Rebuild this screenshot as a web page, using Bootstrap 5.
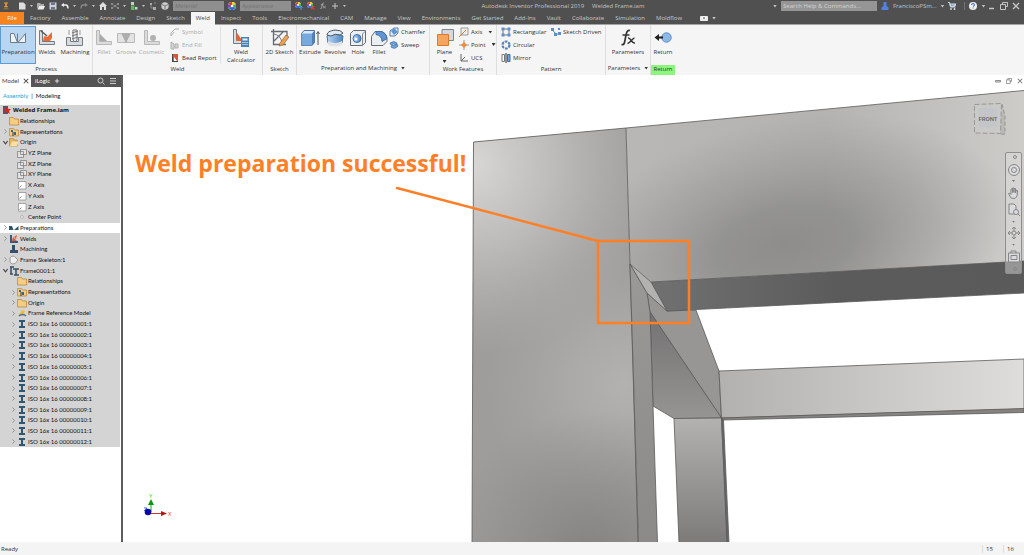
<!DOCTYPE html>
<html lang="en">
<head>
<meta charset="utf-8">
<meta name="viewport" content="width=device-width, initial-scale=1">
<title>Autodesk Inventor Professional 2019 - Welded Frame.iam</title>
<link rel="stylesheet" href="https://cdn.jsdelivr.net/npm/bootstrap@5.3.0/dist/css/bootstrap.min.css">
<script src="https://cdn.jsdelivr.net/npm/bootstrap@5.3.0/dist/js/bootstrap.bundle.min.js"></script>
<style>
body{font:6px/8px "Open Sans","Noto Sans",sans-serif;color:#333;background:#fff;white-space:nowrap}
button,input,select{font:inherit;color:inherit;border:0;background:none;padding:0;margin:0}
svg{display:block;flex:none}
a{color:inherit;text-decoration:none}
.i6{width:6px;height:6px}.i8{width:8px;height:8px}.i10{width:10px;height:10px}.i20{width:20px;height:20px}
.caret{width:4px;height:3px;background:currentColor;clip-path:polygon(0 0,100% 0,50% 100%);flex:none}
/* title bar */
.titlebar{height:12px;background:#505050;color:#c4c4c4}
.qat{gap:4px;padding-left:2px;width:353px}
.qat .caret{width:3px;height:2px}
.combo{width:51px;height:10px;flex:none;background:#8f8f8f;color:#747474;font-style:italic;padding-left:2px;appearance:none}
.search{width:96px;height:10px;background:#959595;padding-left:2px}
.search::placeholder{color:#d4d4d4;opacity:1}
.right{width:251px}
/* tabs */
.tabs{height:13px;background:#505050;color:#c8c8c8;border-bottom:1px solid #a5a5a5}
.tabs .nav-link{padding:2px 5px;margin-right:1px;height:12px;line-height:8px;color:inherit;border:0;border-radius:0}
.tabs .filetab{background:#f5831f;color:#fff;width:24px;text-align:center}
.tabs .active{background:#f5f5f5;color:#444;height:13px;margin-bottom:-1px}
/* ribbon */
.ribbon{height:50px;background:#f5f5f5}
.panel{border-right:1px solid #dedede;flex:none}
.panel:last-child{border:0}
.body-row{height:40px;padding-top:1px}
.panel-title{height:10px;line-height:9px;text-align:center}
.big{height:38px;padding-top:1px;display:flex;flex-direction:column;align-items:center;flex:none;border:1px solid transparent}
.on{background:#b8d6f2;border-color:#5c9bd3}
.off{color:#a9a9a9}.off svg{opacity:.42}
.stack{display:grid;grid-template-rows:12px 13px 13px;align-content:start}
.stack button{display:flex;align-items:center;gap:2px}
.w20{width:20px}.w22{width:22px}.w24{width:24px}.w26{width:26px}.w29{width:29px}.w33{width:33px}.w34{width:34px}.w36{width:36px}.w37{width:37px}.w40{width:40px}.w42{width:42px}.w44{width:44px}.w50{width:50px}.w54{width:54px}
.returntag{background:#8cf57c}
/* browser */
.browser{width:123px;border-right:2px solid #5d5d5d;flex:none;font-family:Lato,"Open Sans",sans-serif;color:#111}
.bhead{height:12px;background:#555;color:#fff}
.bhead .cur{width:31px;background:#fff;color:#444;padding-left:2px}
.modes{height:18px;padding:0 3px;gap:3px}
.modes .here{color:#1f9fd0}
.tree{height:342px;display:grid;grid-template-rows:repeat(32,1fr);background:#d4d4d4;margin:0 1px 0 0;padding:0;list-style:none}
.tree li{display:flex;align-items:center;padding-left:2px}
.tree .tw{width:7px;height:7px}
.tree .d1{margin-left:8px}
.tree span{padding-left:1px}
.picked{background:#fff}
.rootrow{font-weight:bold;font-family:"Open Sans",sans-serif}
/* canvas */
.stage{flex:1 1 0;min-width:0;position:relative;overflow:hidden}
.scene{width:100%;height:100%;position:absolute;inset:0}
.winbtns{position:absolute;right:1px;top:3px;gap:5px;color:#777}
.navbarv{position:absolute;right:2px;top:77px;width:17px;height:122px;border:1px solid #8f8f8f;border-radius:2px;background:rgba(225,225,225,.45);padding:2px 0;color:#777}
.navbarv .caret{width:3px;height:2px}
.bottom{height:13px;background:#f4f4f4;color:#333;padding-left:1px}
.cell{border-left:1px solid #ddd;width:21px;padding-left:3px}
</style>
</head>
<body>
<svg width="0" height="0" class="position-absolute" aria-hidden="true">
<defs>
<linearGradient id="bl" x1="0" x2="1"><stop offset="0" stop-color="#b9d6f5"/><stop offset="1" stop-color="#4f85c4"/></linearGradient>
<symbol id="logo" viewBox="0 0 8 10"><path d="M1.500 .5h5v1.300H5v3.400h1.500v1.300h-5V5.200H3V1.800H1.500z" fill="#f29a2e"/><path d="M1 8.500h6" stroke="#c17c31"/></symbol>
<symbol id="new" viewBox="0 0 8 8"><path d="M1 .5h4.500L7.500 2.500v5H1z" fill="#ddd"/></symbol>
<symbol id="open" viewBox="0 0 8 8"><path d="M0 1h3l1 1h3v2H2L0 7z" fill="#aaa"/><path d="M2 4h6L6.500 7.500H.5z" fill="#eee"/></symbol>
<symbol id="save" viewBox="0 0 8 8"><path d="M.5.5h7v7h-7z" fill="#ccd3df"/><path d="M2 .5h4v2.500H2zM2 5h4v2.500H2z" fill="#6c7686"/></symbol>
<symbol id="undo" viewBox="0 0 8 8"><path d="M3 1v4L0 3z" fill="#eee"/><path d="M2 3h3q2 .2 2 3.500" stroke="#eee" stroke-width="1.500" fill="none"/></symbol>
<symbol id="redo" viewBox="0 0 8 8"><path d="M5 1v4l3-2z" fill="#888"/><path d="M6 3H3Q1 3.200 1 6.500" stroke="#888" stroke-width="1.300" fill="none"/></symbol>
<symbol id="home" viewBox="0 0 8 8"><path d="M4 0 8 4H7v4H5V5H3v3H1V4H0z" fill="#ddd"/></symbol>
<symbol id="team" viewBox="0 0 8 8"><path d="M0 1h2v2H0zM3 3h2v2H3zM6 1h2v2H6zM0 5h2v2H0zM6 5h2v2H6z" fill="#8d8d8d"/><path d="m1 2 6 4M7 2 1 6" stroke="#8d8d8d" stroke-width=".7"/></symbol>
<symbol id="sel" viewBox="0 0 8 8"><path d="M1 0h3v3H1zM5 5h2.500v2.500H5z" fill="#ccc"/><path d="M1 3.500h3.500V8H1z" fill="#5cb85c"/></symbol>
<symbol id="branch" viewBox="0 0 8 8"><path d="M1 1h2v2H1zM4 5h3v3H4z" fill="#aaa"/><path d="M2 3v3h2M5 1h2" stroke="#888" fill="none"/></symbol>
<symbol id="cube" viewBox="0 0 8 8"><circle cx="4" cy="4" r="3.700" fill="#ccc"/><path d="M1 2.500 4 4l3-1.500M4 4v3.500" stroke="#777" fill="none"/></symbol>
<symbol id="ball" viewBox="0 0 8 8"><circle cx="4" cy="4" r="4" fill="#eee"/><path d="M4 4V0A4 4 0 0 1 7.500 2z" fill="#f2d21f"/><path d="M4 4 7.500 2A4 4 0 0 1 7.500 6z" fill="#4caf3a"/><path d="M4 4 7.500 6A4 4 0 0 1 .5 6z" fill="#2f6fd0"/><path d="M4 4 .5 6A4 4 0 0 1 .5 2z" fill="#8a3cae"/><path d="M4 4 .5 2A4 4 0 0 1 4 0z" fill="#e4372b"/><circle cx="4" cy="4" r="1.200" fill="#fff"/></symbol>
<symbol id="ballx" viewBox="0 0 8 8"><use href="#ball" width="6" height="6"/><path d="m4 4 3.500 3.500m0-3.500L4 7.500" stroke="#e23b2e" stroke-width="1.200"/></symbol>
<symbol id="ballp" viewBox="0 0 8 8"><use href="#ball" width="6" height="6"/><path d="M6 8V4M4.500 5.500 6 4l1.500 1.500" stroke="#4aa3e8" fill="none"/></symbol>
<symbol id="user" viewBox="0 0 8 8"><path d="M2.500 0h3v4l2 1.500V8h-7V5.500l2-1.500z" fill="#4f83dc"/></symbol>
<symbol id="cart" viewBox="0 0 8 8"><path d="M0 .5h1.500L2.500 5h5M2 2h6L7 4H2.500z" stroke="#cfe0f0" fill="#8eb0d0"/><circle cx="3" cy="7" r=".9" fill="#ddd"/><circle cx="6.500" cy="7" r=".9" fill="#ddd"/></symbol>
<symbol id="prep" viewBox="0 0 20 20"><path d="M2.500 5.500H6l3.500 9h-7z" fill="#eef3f8" stroke="#6f7a86"/><path d="M9.500 5.500v9M10 14.500l7.500-9v9z" fill="#eef3f8" stroke="#6f7a86"/></symbol>
<symbol id="welds" viewBox="0 0 20 20"><path d="M2.500 2.500h3v11h12v3h-15z" fill="#d8dde2" stroke="#727c86"/><path d="m4 3 6 5" stroke="#555" stroke-width="1.500"/><path d="m6 13 1-5 3 1 5-5v6l-2 3z" fill="#ee6a35"/></symbol>
<symbol id="mach" viewBox="0 0 20 20"><path d="M1.500 9.500h4v4h8v-4h4v8h-16z" fill="#d7dbdf" stroke="#747c84"/><path d="M8 2h4v10l-2 2-2-2zM7 5l6-2M7 8l6-2M7 11l6-2" fill="#eee" stroke="#777"/><path d="M4 2v5M15 2v5" stroke="#999"/></symbol>
<symbol id="fillw" viewBox="0 0 20 20"><path d="M2.500 2.500h3v11h12v3h-15z" fill="#bbb" stroke="#666"/><path d="M6 6v7h7z" fill="#444"/></symbol>
<symbol id="groove" viewBox="0 0 20 20"><path d="M1.500 5.500h17v9h-17z" fill="#ccc" stroke="#666"/><path d="M6 6h8l-4 8zM10 5v10" fill="#555" stroke="#444"/></symbol>
<symbol id="cosm" viewBox="0 0 20 20"><path d="M2.500 2.500h3v11h12v3h-15z" fill="#bbb" stroke="#666"/><circle cx="11" cy="10" r="3" fill="#555"/></symbol>
<symbol id="calc" viewBox="0 0 20 20"><path d="M2.500 1.500h3v11h5v3h-8z" fill="#d8dde2" stroke="#727c86"/><path d="M5.500 4v9h6z" fill="#e8632e"/><path d="M10 9h8v10h-8z" fill="#4d84b8"/><path d="M11.500 10.500h5v2h-5z" fill="#e4f0fa"/><path d="M11.500 14.500h5m-5 2h5" stroke="#fff" stroke-dasharray="1 1"/></symbol>
<symbol id="sk2" viewBox="0 0 20 20"><path d="M3.500 1v15.500H16M1 3.500h16V8M4 13 13 4" fill="none" stroke="#656b71" stroke-width="1.300"/><path d="M4 6q6 1 8 8" fill="none" stroke="#777"/><path d="m10 15 6-8 3 2-6 8-4 1z" fill="#f0a04b" stroke="#7a5a3a" stroke-width=".6"/></symbol>
<symbol id="extr" viewBox="0 0 20 20"><path d="M1.500 5.500 4 2.500h10.500v12L12 17.500H1.500z" fill="#dcebfa" stroke="#4a72a0"/><path d="M1.500 5.500H12v12H1.500z" fill="#78a9dd"/><path d="M12 5.500v12l2.500-3v-12z" fill="#4f82bc"/><path d="M18 17V4M16.500 6 18 3.500 19.500 6" stroke="#555" fill="none"/></symbol>
<symbol id="revo" viewBox="0 0 20 20"><path d="M2 8q8-5 16 0l-1 7q-7 4-14 0z" fill="url(#bl)" stroke="#47719f"/><path d="M2 7q0-4 8-5 6 0 8 3l-3 2q-5-2-9 1z" fill="#dcebfa" stroke="#555"/><path d="M3 13q7 4 14 0v4q-7 3-14 0z" fill="#dfe3e8"/></symbol>
<symbol id="hole" viewBox="0 0 20 20"><path d="M2.500 5.500 5.500 2.500h12v12L14.500 17.500h-12z" fill="#eceff2" stroke="#656d76"/><path d="M14.500 17V6l3-3" stroke="#888" fill="none"/><circle cx="9" cy="10.500" r="4" fill="url(#bl)" stroke="#3d6ea7"/><circle cx="8" cy="11" r="1.500" fill="#fff"/></symbol>
<symbol id="filt" viewBox="0 0 20 20"><path d="M2.500 17.500v-9L6 3.500h6q5 1 6 7v3l-4 4z" fill="#eceff2" stroke="#656d76"/><path d="M7 3.500h5q5 1 6 7l-5 3q0-6-6-7z" fill="#5f95d2" stroke="#3d6ea7"/></symbol>
<symbol id="plane" viewBox="0 0 20 20"><path d="M7 1.500h11.500v11H7z" fill="#d5d9dd" stroke="#7c858e"/><path d="M2.500 6.500h11v11h-11z" fill="#f6a561" stroke="#d87b2c"/></symbol>
<symbol id="fx" viewBox="0 0 20 20"><path d="M12 2.500c-3-1-3.500 2-4.500 7s-1 8-4 7M4.500 7h7" stroke="currentColor" stroke-width="1.700" fill="none"/><path d="M10 10c3-1 3 6 7 5M16.500 10c-2 0-4 5-7 5.500" stroke="currentColor" stroke-width="1.400" fill="none"/></symbol>
<symbol id="ret" viewBox="0 0 20 20"><circle cx="13.500" cy="9.500" r="4.700" fill="#8db8e8" stroke="#5b8dc9"/><path d="M10 9.500H3" stroke="#222" stroke-width="2"/><path d="M6 6v7L1.500 9.500z" fill="#222"/></symbol>
<symbol id="sym" viewBox="0 0 10 10"><path d="M1 9V6l4-4h4M1 9l3-4" stroke="#555" fill="none"/></symbol>
<symbol id="endf" viewBox="0 0 10 10"><path d="M1 2v7h3V4zm4 2h3v4H5z" stroke="#555" fill="#aaa"/></symbol>
<symbol id="bead" viewBox="0 0 10 10"><path d="M2 1h6v8H2z" fill="#e2513b"/><path d="M2.500 1v8M2 8.500h6" stroke="#444"/><path d="m4 4 3 4H4z" fill="#fff"/></symbol>
<symbol id="cham" viewBox="0 0 10 10"><path d="M1 9V4l4-3h4v5L6 9z" fill="#e8edf2" stroke="#5a7ca5"/><path d="m5 1 4 4-4 3-3-4z" fill="#5f95d2"/></symbol>
<symbol id="sweep" viewBox="0 0 10 10"><path d="M1 3q4-3 7 0l-1 2q-3-2-5 0zM2 7q4 3 7-1L8 4Q5 7 3 5z" fill="#6fa2da" stroke="#3d6ea7" stroke-width=".7"/></symbol>
<symbol id="axis" viewBox="0 0 10 10"><path d="M2 1h7v7H2z" fill="#eee" stroke="#999"/><path d="m0 10 7-7" stroke="#e27c2e"/></symbol>
<symbol id="point" viewBox="0 0 10 10"><path d="M5 0v10M0 5h10" stroke="#999"/><path d="m5 2 3 3-3 3-3-3z" fill="#f08a3c"/></symbol>
<symbol id="ucs" viewBox="0 0 10 10"><path d="M2 1v7h7M2 8l4-4" stroke="#666" fill="none"/></symbol>
<symbol id="rect" viewBox="0 0 10 10"><path d="M2 2h6v6H2z" stroke="#777" fill="none"/><path d="M.5.5h3v3h-3zM6.500.5h3v3h-3zM.5 6.500h3v3h-3zM6.500 6.500h3v3h-3z" fill="#5d8fd0"/></symbol>
<symbol id="circ" viewBox="0 0 10 10"><circle cx="5" cy="5" r="3.500" fill="none" stroke="#5280bb" stroke-width="2.200" stroke-dasharray="2.700 1"/></symbol>
<symbol id="mirr" viewBox="0 0 10 10"><path d="M1 1.500h2.500v7H1z" fill="#fff" stroke="#777"/><path d="M5 0v10" stroke="#333"/><path d="M6.500 1.500H9v7H6.500z" fill="#6ea4dd" stroke="#3d6ea7"/></symbol>
<symbol id="skd" viewBox="0 0 10 10"><path d="M1 2q3 6 8 5" stroke="#777" fill="none"/><path d="M0 1h3v3H0zM3 6h3v3H3zM7 1h2v2H7zM7 5h3v3H7z" fill="#5d8fd0"/></symbol>
<symbol id="asm" viewBox="0 0 10 10"><path d="M1 1h5v8H1z" fill="#3f5c78"/><path d="m5 1 1.500 3H9L7 6l1 3-3-2-3 2 1-3-2-2h3z" fill="#d52727"/></symbol>
<symbol id="fold" viewBox="0 0 10 10"><path d="M.5 1.500h4l1 1.500h4v6h-9z" fill="#f4cd84" stroke="#bd8b3c" stroke-width=".8"/></symbol>
<symbol id="foldo" viewBox="0 0 10 10"><path d="M.5 1.500h4l1 1.500h3v6h-8z" fill="#e4b560" stroke="#b9883a" stroke-width=".7"/><path d="M3 4.500h6.500L8 9H1z" fill="#fbe0a5"/></symbol>
<symbol id="rep" viewBox="0 0 10 10"><path d="M.5 1.500h4l1 1.500h4v6h-9z" fill="#f4cd84" stroke="#bd8b3c" stroke-width=".8"/><path d="M2 3h2v2H2zM5 5h2v3H5z" fill="#3e6185"/><path d="M4 5v4" stroke="#333"/></symbol>
<symbol id="tplane" viewBox="0 0 10 10"><path d="M3.500 1.500h6v5h-6zM.5 3.500h6v6h-6z" fill="#e2e2e2" stroke="#777" stroke-width=".7"/></symbol>
<symbol id="taxis" viewBox="0 0 10 10"><path d="M1.500 1.500h7.500v7.500H1.500z" fill="#fff" stroke="#888" stroke-width=".7"/><path d="m2.500 7.500 2-2" stroke="#999"/></symbol>
<symbol id="tpoint" viewBox="0 0 10 10"><path d="m5 3 2 2-2 2-2-2z" fill="#ddd" stroke="#bbb"/></symbol>
<symbol id="tprep" viewBox="0 0 10 10"><path d="M0 3h3l1.500 4H0zM5 7l4.500-4v4z" fill="#2f5470"/></symbol>
<symbol id="tweld" viewBox="0 0 10 10"><path d="M1 1h2v6h6v2H1z" fill="#3c5b78"/><path d="m3 7 1-4 4 4zM5 3l3-2-1 4z" fill="#e35b35"/></symbol>
<symbol id="tmach" viewBox="0 0 10 10"><path d="M1 6h2V1h3v5h3v3H1z" fill="#31516f"/></symbol>
<symbol id="tskel" viewBox="0 0 10 10"><path d="M1 3q3-4 6 0l2 2q-3 5-6 4l-2-2z" fill="#eee" stroke="#999"/></symbol>
<symbol id="tframe" viewBox="0 0 10 10"><path d="M1 1h4M2 1v7M1 8h3M4 3h6M7 3v6M5 9h5" stroke="#374e63" stroke-width="1.500"/></symbol>
<symbol id="tref" viewBox="0 0 10 10"><path d="m1 8 4-6 3 1-2 5z" fill="#f0bc3e"/><path d="M2 8q4-3 7 0" stroke="#3a72b8" stroke-width="1.500" fill="none"/></symbol>
<symbol id="beam" viewBox="0 0 10 10"><path d="M2 1h6v2H6v4h2v2H2V7h2V3H2z" fill="#33566f"/></symbol>
<symbol id="shut" viewBox="0 0 10 10"><path d="m3.500 2 3 3-3 3" stroke="#8d8d8d" stroke-width="1.300" fill="none"/></symbol>
<symbol id="exp" viewBox="0 0 10 10"><path d="m2 3 3 4 3-4" stroke="#444" stroke-width="1.500" fill="none"/></symbol>
<symbol id="wclose" viewBox="0 0 8 8"><path d="m1 1 6 6m0-6L1 7" stroke="currentColor" stroke-width="1.400"/></symbol>
<symbol id="wrest" viewBox="0 0 8 8"><path d="M2.500 2.500v-2h5v4h-2M.5 2.500h5v5h-5z" stroke="currentColor" fill="none"/></symbol>
<symbol id="wmin" viewBox="0 0 8 8"><path d="M1 6.500h5" stroke="currentColor" stroke-width="1.500"/></symbol>
<symbol id="dmin" viewBox="0 0 6 6"><path d="M.5 2.500h5v1.500h-5z" fill="#ddd" stroke="currentColor" stroke-width=".8"/></symbol>
<symbol id="mag" viewBox="0 0 8 8"><circle cx="3.500" cy="3.500" r="2.500" stroke="#ccc" fill="none"/><path d="m5.500 5.500 2 2" stroke="#ccc"/></symbol>
<symbol id="plus" viewBox="0 0 8 8"><path d="M4 1v6M1 4h6" stroke="currentColor"/></symbol>
</defs>
</svg>

<div class="d-flex flex-column vh-100 overflow-hidden">
<header class="titlebar d-flex align-items-center flex-shrink-0">
  <div class="qat d-flex align-items-center flex-shrink-0" id="qat"></div>
  <div class="flex-grow-1 text-center">Autodesk Inventor Professional 2019 &nbsp; &nbsp; Welded Frame.iam</div>
  <div class="right d-flex align-items-center flex-shrink-0">
    <span class="caret me-1"></span>
    <input class="search" type="text" placeholder="Search Help &amp; Commands..." aria-label="Search help">
    <button class="d-flex align-items-center gap-1 ms-1" aria-label="Account"><svg class="i8"><use href="#user"/></svg>FranciscoPSm...<span class="caret"></span></button>
    <button class="ms-1 pe-2 border-end border-secondary" aria-label="Store"><svg class="i8"><use href="#cart"/></svg></button>
    <button class="d-flex align-items-center gap-1 ms-1" aria-label="Help"><svg class="i8" viewBox="0 0 8 8"><circle cx="4" cy="4" r="4" fill="#eee"/><path d="M2.500 3q0-1.500 1.500-1.500T5.500 3Q5.500 4 4 4.500M4 5.500v1" stroke="#3567b5" fill="none"/></svg><span class="caret"></span></button>
    <div class="d-flex gap-1 ms-auto pe-1" id="win"></div>
  </div>
</header>
<nav class="tabs nav flex-nowrap flex-shrink-0">
  <a class="nav-link filetab" href="#">File</a><a class="nav-link" href="#">Factory</a><a class="nav-link" href="#">Assemble</a><a class="nav-link" href="#">Annotate</a><a class="nav-link" href="#">Design</a><a class="nav-link" href="#">Sketch</a><a class="nav-link active" href="#">Weld</a><a class="nav-link" href="#">Inspect</a><a class="nav-link" href="#">Tools</a><a class="nav-link" href="#">Electromechanical</a><a class="nav-link" href="#">CAM</a><a class="nav-link" href="#">Manage</a><a class="nav-link" href="#">View</a><a class="nav-link" href="#">Environments</a><a class="nav-link" href="#">Get Started</a><a class="nav-link" href="#">Add-Ins</a><a class="nav-link" href="#">Vault</a><a class="nav-link" href="#">Collaborate</a><a class="nav-link" href="#">Simulation</a><a class="nav-link" href="#">Moldflow</a>
  <button class="d-flex align-items-center gap-1 ms-2 ps-1" aria-label="Ribbon display"><svg width="8" height="5"><rect width="8" height="5" rx="1" fill="#eee"/><path d="M3 1.500h2L4 3.500z" fill="#444"/></svg><span class="caret"></span></button>
</nav>
<section class="ribbon d-flex flex-shrink-0">
  <div class="panel"><div class="body-row d-flex">
    <button class="big on w36"><svg class="i20"><use href="#prep"/></svg>Preparation</button>
    <button class="big w22"><svg class="i20"><use href="#welds"/></svg>Welds</button>
    <button class="big w34"><svg class="i20"><use href="#mach"/></svg>Machining</button></div>
    <div class="panel-title">Process</div></div>
  <div class="panel"><div class="body-row d-flex">
    <button class="big off w22"><svg class="i20"><use href="#fillw"/></svg>Fillet</button>
    <button class="big off w22"><svg class="i20"><use href="#groove"/></svg>Groove</button>
    <button class="big off w29"><svg class="i20"><use href="#cosm"/></svg>Cosmetic</button>
    <div class="stack w54 ps-1"><button class="off"><svg class="i10"><use href="#sym"/></svg>Symbol</button><button class="off"><svg class="i10"><use href="#endf"/></svg>End Fill</button><button><svg class="i10"><use href="#bead"/></svg>Bead Report</button></div>
    <button class="big w42 border-start"><svg class="i20"><use href="#calc"/></svg>Weld<br>Calculator</button></div>
    <div class="panel-title">Weld</div></div>
  <div class="panel"><div class="body-row d-flex"><button class="big w33"><svg class="i20"><use href="#sk2"/></svg>2D Sketch</button></div><div class="panel-title">Sketch</div></div>
  <div class="panel"><div class="body-row d-flex">
    <button class="big w26"><svg class="i20"><use href="#extr"/></svg>Extrude</button>
    <button class="big w24"><svg class="i20"><use href="#revo"/></svg>Revolve</button>
    <button class="big w22"><svg class="i20"><use href="#hole"/></svg>Hole</button>
    <button class="big w20"><svg class="i20"><use href="#filt"/></svg>Fillet</button>
    <div class="stack w40"><button><svg class="i10"><use href="#cham"/></svg>Chamfer</button><button><svg class="i10"><use href="#sweep"/></svg>Sweep</button></div></div>
    <div class="panel-title d-flex justify-content-center align-items-center gap-1 pb-1">Preparation and Machining <span class="caret"></span></div></div>
  <div class="panel"><div class="body-row d-flex">
    <button class="big w29"><svg class="i20"><use href="#plane"/></svg>Plane<span class="caret mt-1"></span></button>
    <div class="stack w37"><button><svg class="i10"><use href="#axis"/></svg>Axis<span class="caret ms-1"></span></button><button><svg class="i10"><use href="#point"/></svg>Point<span class="caret ms-1"></span></button><button><svg class="i10"><use href="#ucs"/></svg>UCS</button></div></div>
    <div class="panel-title">Work Features</div></div>
  <div class="panel"><div class="body-row d-flex ps-1">
    <div class="stack w50"><button><svg class="i10"><use href="#rect"/></svg>Rectangular</button><button><svg class="i10"><use href="#circ"/></svg>Circular</button><button><svg class="i10"><use href="#mirr"/></svg>Mirror</button></div>
    <div class="stack w54"><button><svg class="i10"><use href="#skd"/></svg>Sketch Driven</button></div></div>
    <div class="panel-title">Pattern</div></div>
  <div class="panel"><div class="body-row d-flex"><button class="big w44"><svg class="i20"><use href="#fx"/></svg>Parameters</button></div><div class="panel-title d-flex justify-content-center align-items-center gap-1 pb-1">Parameters <span class="caret"></span></div></div>
  <div class="panel"><div class="body-row d-flex"><button class="big w24"><svg class="i20"><use href="#ret"/></svg>Return</button></div><div class="panel-title returntag">Return</div></div>
</section>
<main class="d-flex flex-grow-1">
  <aside class="browser">
    <div class="bhead d-flex align-items-stretch">
      <button class="cur d-flex align-items-center gap-1">Model <svg class="i6" viewBox="0 0 8 8"><use href="#wclose"/></svg></button>
      <button class="px-1">iLogic</button><button aria-label="Add"><svg class="i6"><use href="#plus"/></svg></button>
      <button class="ms-auto me-1" aria-label="Search"><svg class="i8"><use href="#mag"/></svg></button><button class="me-1" aria-label="Menu"><svg class="i8" viewBox="0 0 8 8"><path d="M1 1.500h6M1 4h6M1 6.500h6" stroke="#ccc"/></svg></button>
    </div>
    <div class="modes d-flex align-items-center"><a href="#" class="here">Assembly</a><span>|</span><a href="#">Modeling</a></div>
    <ul class="tree" id="tree"></ul>
  </aside>
  <div class="stage">
    <svg class="scene" viewBox="123 75 901 467" preserveAspectRatio="xMidYMid slice">
      <defs>
        <radialGradient id="lt" gradientUnits="userSpaceOnUse" cx="473" cy="165" r="190"><stop offset="0" stop-color="#d8d7d5"/><stop offset=".4" stop-color="#d0cfcd" stop-opacity=".65"/><stop offset="1" stop-color="#c0bfbd" stop-opacity="0"/></radialGradient>
        <radialGradient id="lm" gradientUnits="userSpaceOnUse" cx="625" cy="385" r="140"><stop offset="0" stop-color="#b3b2b0"/><stop offset=".4" stop-color="#b0afad" stop-opacity=".7"/><stop offset="1" stop-color="#aaa" stop-opacity="0"/></radialGradient>
        <radialGradient id="ld" gradientUnits="userSpaceOnUse" cx="590" cy="560" r="150"><stop offset="0" stop-color="#828180"/><stop offset=".5" stop-color="#8a8988" stop-opacity=".6"/><stop offset="1" stop-color="#8e8d8c" stop-opacity="0"/></radialGradient>
        <linearGradient id="beamr" gradientUnits="userSpaceOnUse" x1="626" y1="0" x2="1024" y2="0"><stop offset="0" stop-color="#b8b7b5"/><stop offset=".5" stop-color="#b4b3b1"/><stop offset="1" stop-color="#cdccc9"/></linearGradient>
        <radialGradient id="bd" gradientUnits="userSpaceOnUse" cx="0" cy="0" r="1" gradientTransform="translate(785 245) rotate(-12) scale(230 125)"><stop offset="0" stop-color="#8e8d8b"/><stop offset=".3" stop-color="#90908e" stop-opacity=".92"/><stop offset=".65" stop-color="#979694" stop-opacity=".5"/><stop offset="1" stop-color="#9c9b99" stop-opacity="0"/></radialGradient>
        <linearGradient id="dk" x1="0" x2="1"><stop offset="0" stop-color="#717171"/><stop offset=".5" stop-color="#5b5b5b"/><stop offset="1" stop-color="#5a5a5a"/></linearGradient>
        <linearGradient id="lowb" x1="0" x2="1"><stop offset="0" stop-color="#b2b1af"/><stop offset="1" stop-color="#dedddb"/></linearGradient>
        <linearGradient id="post" x1="0" x2="0" y2="1"><stop offset="0" stop-color="#b3b2b0"/><stop offset="1" stop-color="#7d7b7a"/></linearGradient>
        <linearGradient id="tri" x1="0" x2="0" y2="1"><stop offset="0" stop-color="#737171"/><stop offset="1" stop-color="#969593"/></linearGradient>
        <linearGradient id="sidef" x1="0" x2="0" y2="1"><stop offset="0" stop-color="#9a9997"/><stop offset="1" stop-color="#8b8a88"/></linearGradient>
        <path id="colf" d="M473.500 142 626 128l4 136 8 278H472z"/>
        <path id="beamf" d="m626 128 398-37.500V261L651 282l-21-18z"/>
      </defs>
      <use href="#colf" fill="#9e9d9b"/><use href="#colf" fill="url(#lt)"/><use href="#colf" fill="url(#lm)"/><use href="#colf" fill="url(#ld)"/>
      <use href="#beamf" fill="url(#beamr)"/><use href="#beamf" fill="url(#bd)"/>
      <g stroke="#5c5b5a" stroke-width=".8" stroke-linejoin="round">
        <path d="M473.500 142 626 128l398-37.500M626 128l4 136 8 278M473.500 142 472 542" fill="none"/>
        <path d="m647 293 20 18 29-1 23 61 2.500 47L650 312z" fill="#979694"/>
        <path d="m651 282 373-21v32l-357 18z" fill="url(#dk)"/>
        <path d="m650 312 71.500 106-47.500.5-21-12.500z" fill="url(#tri)"/>
        <path d="m630 264 17 29 3 19 3 94 4.500 137H638.500z" fill="url(#sidef)"/>
        <path d="m630 264 21 18 16 29-20-18z" fill="#b3b2b0"/>
        <path d="m719 371 305-12v50l-302.500 9z" fill="url(#lowb)"/>
        <path d="m721.500 418 302.500-9.500v4L722.500 420z" fill="#858483"/>
        <path d="m674 418.500 47.500-.5 6 125H679z" fill="url(#post)"/>
        <path d="m721.500 418 2 2 5.500 123h-2z" fill="#666"/>
      </g>
      <path d="m397 188 201 53" stroke="#ff7f27" stroke-width="2.500" stroke-linecap="round"/>
      <rect x="598" y="241" width="91" height="82" fill="none" stroke="#ff7f27" stroke-width="2.500"/>
      <text x="135" y="172" font-family="Open Sans, Noto Sans, sans-serif" font-size="23" font-weight="700" fill="#ff7f27">Weld preparation successful!</text>
      <g fill="#c9c9c7" stroke="#8c8c8c" stroke-width=".8"><path d="m1002 104 3 12v18l-5 .5" fill="#b9b9b7" stroke-dasharray="4 2"/><path d="m974.500 104.500 27-1-1 30-26-.5z" stroke-dasharray="5 2"/><path d="M979 108h18v19h-18z" fill="#c3c5c9" stroke="none"/></g>
      <text x="988" y="121" text-anchor="middle" font-family="Roboto, sans-serif" font-size="6" font-weight="500" fill="#666">FRONT</text>
      <g stroke-width="1"><path d="M151 512v-9" stroke="#1a1"/><path d="m148 505 3-6 3 6z" fill="#0a990a"/><path d="M149 513.500h14" stroke="#c33"/><path d="m161 511 6 2.500-6 2.500z" fill="#b31515"/><circle cx="148" cy="512" r="3.300" fill="#0808a8"/><path d="M144 508h3l-3 3" stroke="#46c" fill="none"/></g>
      <g font-family="Open Sans, sans-serif" font-size="6"><text x="149" y="498" fill="#2c2">Y</text><text x="168" y="516" fill="#e33">X</text></g>
    </svg>
    <div class="winbtns d-flex"><button aria-label="Minimize"><svg class="i6"><use href="#dmin"/></svg></button><button aria-label="Restore"><svg class="i6"><use href="#wrest"/></svg></button><button aria-label="Close"><svg class="i6"><use href="#wclose"/></svg></button></div>
    <div class="navbarv d-flex flex-column align-items-center justify-content-between" id="navv"></div>
  </div>
</main>
<footer class="bottom d-flex align-items-center flex-shrink-0"><span class="me-auto">Ready</span><span class="cell">15</span><span class="cell">16</span></footer>
</div>
<script>
const icon = (id, cls = 'i8') => `<svg class="${cls}"><use href="#${id}"/></svg>`;
const tool = id => `<button aria-label="${id}">${icon(id)}</button>`;
const dot = '<span class="caret"></span>';
document.getElementById('qat').innerHTML =
  tool('logo') + '<span></span>' + tool('new') + dot + tool('open') + tool('save') + tool('undo') + dot + tool('redo') + dot +
  tool('home') + tool('team') + dot + tool('sel') + dot + tool('branch') + tool('cube') +
  '<select class="combo" aria-label="Material"><option>Material</option></select>' + tool('ball') +
  '<select class="combo" aria-label="Appearance"><option>Appearance</option></select>' +
  tool('ballp') + tool('ballx') + tool('fx') + tool('plus') + dot;
document.getElementById('win').innerHTML = ['wmin', 'wrest', 'wclose'].map(n => `<button aria-label="${n}">${icon(n)}</button>`).join('');

// [depth, twisty, icon, label, extra class]
const rows = [
  [0, null, 'asm', 'Welded Frame.iam', 'rootrow'], [0, '', 'fold', 'Relationships'], [0, 'shut', 'rep', 'Representations'], [0, 'exp', 'foldo', 'Origin'],
  [1, '', 'tplane', 'YZ Plane'], [1, '', 'tplane', 'XZ Plane'], [1, '', 'tplane', 'XY Plane'],
  [1, '', 'taxis', 'X Axis'], [1, '', 'taxis', 'Y Axis'], [1, '', 'taxis', 'Z Axis'], [1, '', 'tpoint', 'Center Point'],
  [0, 'shut', 'tprep', 'Preparations', 'picked'], [0, 'shut', 'tweld', 'Welds'], [0, '', 'tmach', 'Machining'],
  [0, 'shut', 'tskel', 'Frame Skeleton:1'], [0, 'exp', 'tframe', 'Frame0001:1'],
  [1, '', 'fold', 'Relationships'], [1, 'shut', 'rep', 'Representations'], [1, 'shut', 'fold', 'Origin'], [1, 'shut', 'tref', 'Frame Reference Model']
];
for (let n = 1; n <= 12; n++) rows.push([1, 'shut', 'beam', 'ISO 16x 16 ' + String(n).padStart(8, '0') + ':1']);
document.getElementById('tree').innerHTML = rows.map(([d, t, ic, label, cls = '']) =>
  `<li class="${cls}">${t === null ? '' : `<svg class="tw${d ? ' d1' : ''}">${t ? `<use href="#${t}"/>` : ''}</svg>`}${icon(ic, 'i10')}<span>${label}</span></li>`).join('');

const nav = [
  '<circle cx="7" cy="7" r="5.500"/><circle cx="7" cy="7" r="2.500"/>',
  '<path d="M4 12 1.500 7.500l1-.5L4 8.500V3h1.500v3.500V2H7v4.500V2.500h1.500V7l1-3 1 .5L10 10l-2 2.500z"/>',
  '<path d="M2 1h5l2 2v8H2z"/><circle cx="9" cy="9" r="2.500"/><path d="m11 11 2 2"/>',
  '<path d="M7 1v12M1 7h12M5 3l2-2 2 2M5 11l2 2 2-2M3 5 1 7l2 2M11 5l2 2-2 2"/><circle cx="7" cy="7" r="2"/>',
  '<path d="M1.500 4h11v9h-11zM4 6.500h6v4H4zM4 4V2h5v2"/>'
];
const ring = '<svg class="ms-auto me-1" width="4" height="4"><circle cx="2" cy="2" r="1.500" fill="none" stroke="#888"/></svg>';
document.getElementById('navv').innerHTML = ring + nav.map((p, i) =>
  `<button aria-label="Navigate ${i + 1}"><svg width="14" height="14" viewBox="0 0 14 14" fill="#d9dbde" stroke="#858585">${p}</svg></button>` + (i === 4 || i === 1 ? '' : dot)).join('') + ring;
</script>
</body>
</html>
